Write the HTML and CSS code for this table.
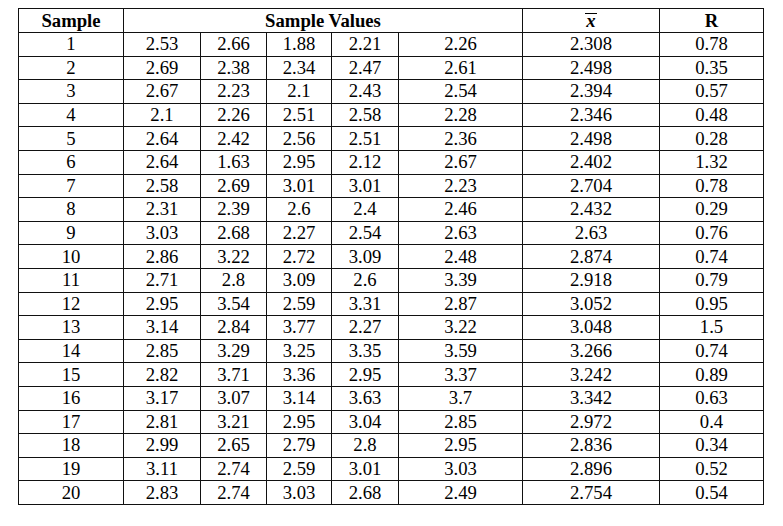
FILE: index.html
```
<!DOCTYPE html>
<html>
<head>
<meta charset="utf-8">
<link rel="stylesheet" href="styles.css">
</head>
<body>
<table class="data">
<colgroup>
<col class="c-s"><col class="c-v1"><col class="c-v2"><col class="c-v3"><col class="c-v4"><col class="c-v5"><col class="c-x"><col class="c-r">
</colgroup>
<thead>
<tr><th>Sample</th><th colspan="5">Sample Values</th><th><span class="xbar">x</span></th><th>R</th></tr>
</thead>
<tbody>
<tr><td>1</td><td>2.53</td><td>2.66</td><td>1.88</td><td>2.21</td><td>2.26</td><td>2.308</td><td>0.78</td></tr>
<tr><td>2</td><td>2.69</td><td>2.38</td><td>2.34</td><td>2.47</td><td>2.61</td><td>2.498</td><td>0.35</td></tr>
<tr><td>3</td><td>2.67</td><td>2.23</td><td>2.1</td><td>2.43</td><td>2.54</td><td>2.394</td><td>0.57</td></tr>
<tr><td>4</td><td>2.1</td><td>2.26</td><td>2.51</td><td>2.58</td><td>2.28</td><td>2.346</td><td>0.48</td></tr>
<tr><td>5</td><td>2.64</td><td>2.42</td><td>2.56</td><td>2.51</td><td>2.36</td><td>2.498</td><td>0.28</td></tr>
<tr><td>6</td><td>2.64</td><td>1.63</td><td>2.95</td><td>2.12</td><td>2.67</td><td>2.402</td><td>1.32</td></tr>
<tr><td>7</td><td>2.58</td><td>2.69</td><td>3.01</td><td>3.01</td><td>2.23</td><td>2.704</td><td>0.78</td></tr>
<tr><td>8</td><td>2.31</td><td>2.39</td><td>2.6</td><td>2.4</td><td>2.46</td><td>2.432</td><td>0.29</td></tr>
<tr><td>9</td><td>3.03</td><td>2.68</td><td>2.27</td><td>2.54</td><td>2.63</td><td>2.63</td><td>0.76</td></tr>
<tr><td>10</td><td>2.86</td><td>3.22</td><td>2.72</td><td>3.09</td><td>2.48</td><td>2.874</td><td>0.74</td></tr>
<tr><td>11</td><td>2.71</td><td>2.8</td><td>3.09</td><td>2.6</td><td>3.39</td><td>2.918</td><td>0.79</td></tr>
<tr><td>12</td><td>2.95</td><td>3.54</td><td>2.59</td><td>3.31</td><td>2.87</td><td>3.052</td><td>0.95</td></tr>
<tr><td>13</td><td>3.14</td><td>2.84</td><td>3.77</td><td>2.27</td><td>3.22</td><td>3.048</td><td>1.5</td></tr>
<tr><td>14</td><td>2.85</td><td>3.29</td><td>3.25</td><td>3.35</td><td>3.59</td><td>3.266</td><td>0.74</td></tr>
<tr><td>15</td><td>2.82</td><td>3.71</td><td>3.36</td><td>2.95</td><td>3.37</td><td>3.242</td><td>0.89</td></tr>
<tr><td>16</td><td>3.17</td><td>3.07</td><td>3.14</td><td>3.63</td><td>3.7</td><td>3.342</td><td>0.63</td></tr>
<tr><td>17</td><td>2.81</td><td>3.21</td><td>2.95</td><td>3.04</td><td>2.85</td><td>2.972</td><td>0.4</td></tr>
<tr><td>18</td><td>2.99</td><td>2.65</td><td>2.79</td><td>2.8</td><td>2.95</td><td>2.836</td><td>0.34</td></tr>
<tr><td>19</td><td>3.11</td><td>2.74</td><td>2.59</td><td>3.01</td><td>3.03</td><td>2.896</td><td>0.52</td></tr>
<tr><td>20</td><td>2.83</td><td>2.74</td><td>3.03</td><td>2.68</td><td>2.49</td><td>2.754</td><td>0.54</td></tr>
</tbody>
</table>
</body>
</html>
```
FILE: styles.css
```
html, body {
  margin: 0;
  padding: 0;
  background: #fff;
}
body {
  padding: 8px 0 0 18px;
  color: #000;
}
.data {
  border-collapse: collapse;
  table-layout: fixed;
  width: 745px;
  font-family: "Liberation Serif", serif;
  font-size: 18.7px;
}
.c-s { width: 105px; }
.c-v1 { width: 77px; }
.c-v2 { width: 66px; }
.c-v3 { width: 65px; }
.c-v4 { width: 67px; }
.c-v5 { width: 124px; }
.c-x { width: 137px; }
.c-r { width: 104px; }
.data th, .data td {
  border: 1px solid #111;
  padding: 0;
  text-align: center;
  line-height: 20px;
  font-family: "Liberation Serif", serif;
}
.data thead tr { height: 24px; }
.data tbody tr { height: 23.6px; }
.data th {
  font-weight: bold;
}
.xbar {
  display: inline-block;
  font-style: italic;
  font-weight: bold;
  line-height: 14px;
  border-top: 1.5px solid #000;
  padding: 0 1px;
}
```
